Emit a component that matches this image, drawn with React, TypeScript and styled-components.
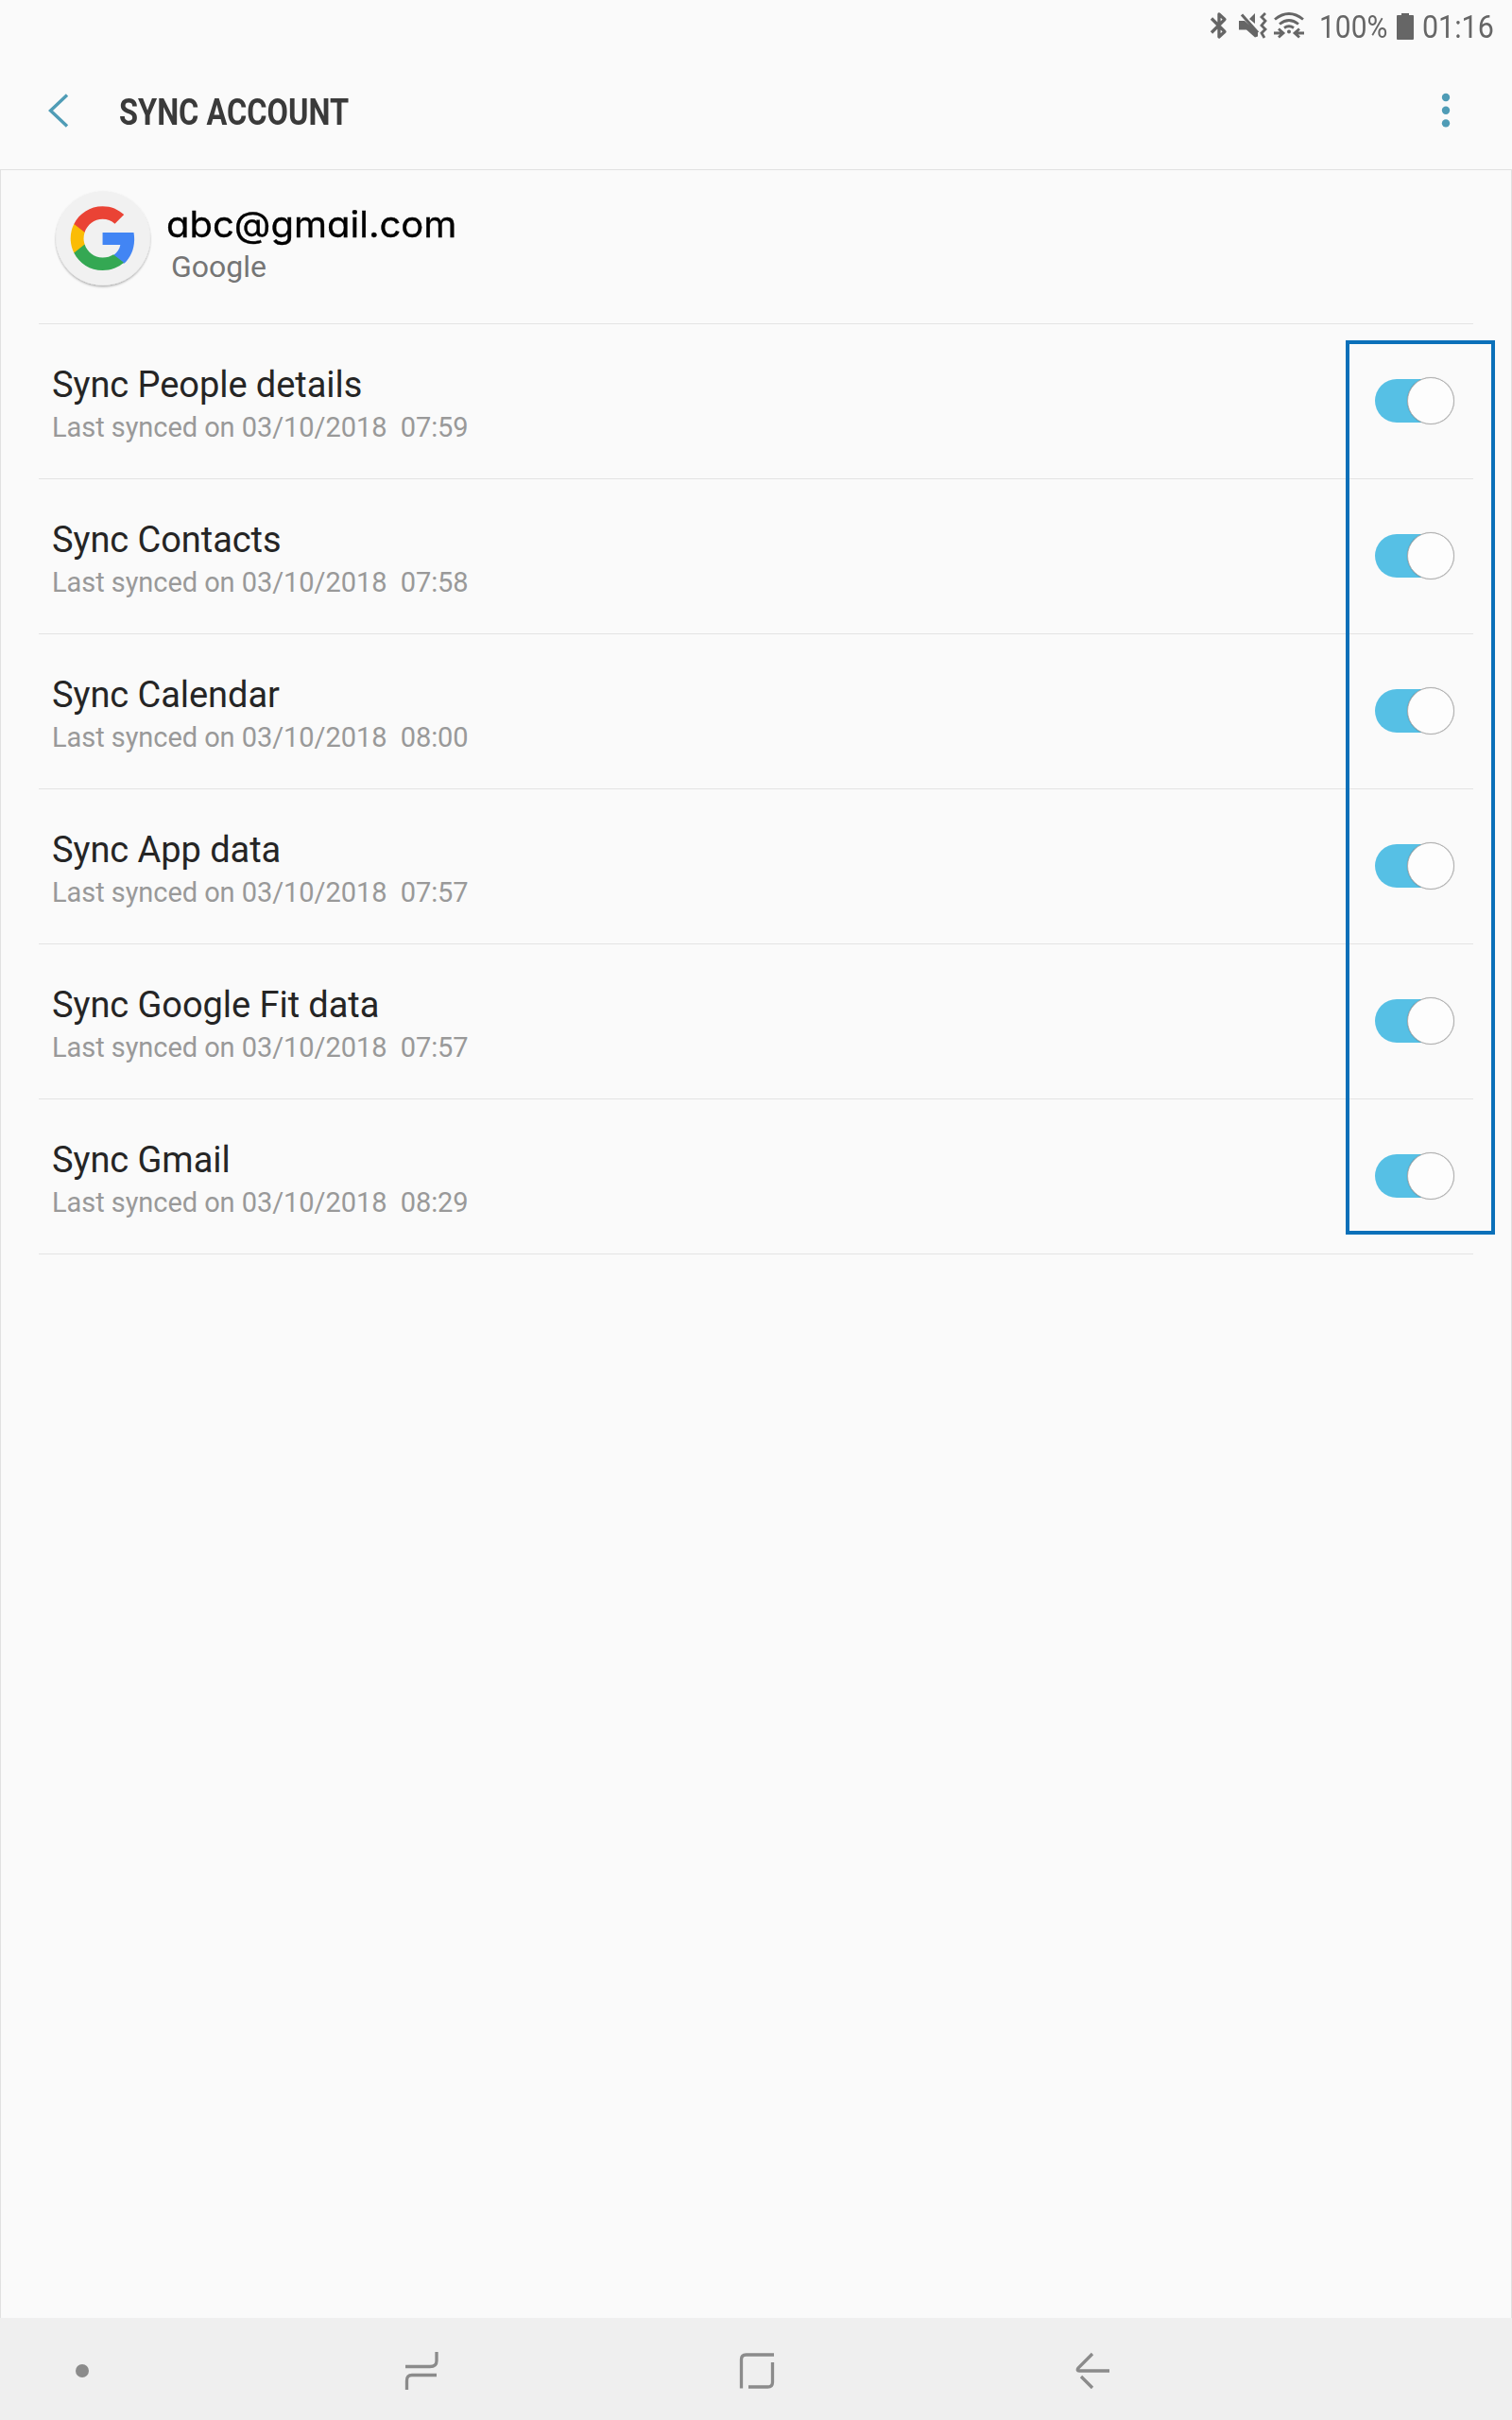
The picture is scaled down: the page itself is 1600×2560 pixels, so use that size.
import React from "react";
import styled, { createGlobalStyle } from "styled-components";

const GlobalStyle = createGlobalStyle`
  * { box-sizing: border-box; }
  html, body { margin: 0; padding: 0; background: #fafafa; }
  body { font-family: Roboto, "Noto Sans", sans-serif; }
`;

const Screen = styled.div`
  width: 1600px;
  height: 2560px;
  display: flex;
  flex-direction: column;
  background: #fafafa;
  overflow: hidden;
`;

const StatusBar = styled.header`
  height: 56px;
  padding-left: 1280px;
  display: flex;
  align-items: center;
  flex: none;
  color: #666;
`;

const StatusIcons = styled.svg`
  width: 102px;
  height: 56px;
  flex: none;
`;

const StatusText = styled.span<{ $width: number; $left: number; $scale: number }>`
  width: ${(p) => p.$width}px;
  margin-left: ${(p) => p.$left}px;
  flex: none;
  font-size: 34px;
  line-height: 56px;
  white-space: nowrap;
  transform: scaleX(${(p) => p.$scale});
  transform-origin: left center;
`;

const Battery = styled.svg`
  width: 18px;
  height: 28px;
  flex: none;
  margin: 0 0 1px 11px;
`;

const TitleBar = styled.div`
  height: 123px;
  padding: 0 64px 0 51px;
  display: flex;
  align-items: center;
  flex: none;
`;

const BackIcon = styled.svg`
  width: 22px;
  height: 36px;
  margin-bottom: 1px;
`;

const Title = styled.h1`
  flex: 1;
  margin: 3px 0 0 53px;
  font-size: 38px;
  font-weight: 700;
  line-height: 44px;
  color: #3a3a3a;
  transform: scaleX(0.856);
  transform-origin: left center;
  white-space: nowrap;
`;

const MenuIcon = styled.svg`
  width: 12px;
  height: 40px;
  margin-bottom: 1px;
`;

const Panel = styled.main`
  flex: 1;
  border: 1px solid #e1e1e1;
  border-bottom: 0;
  padding: 0 40px;
`;

const Account = styled.section`
  height: 163px;
  display: flex;
  border-bottom: 1px solid #e3e3e3;
  padding: 16px 0 0 12px;
`;

const Avatar = styled.svg`
  width: 112px;
  height: 112px;
  flex: none;
`;

const AccountText = styled.div`
  padding: 17px 0 0 11px;
`;

const Email = styled.div`
  font-family: Inter, sans-serif;
  font-feature-settings: "cv11", "ss03";
  font-size: 38px;
  line-height: 48px;
  color: #000;
  white-space: nowrap;
  -webkit-text-stroke: 0.35px #000;
  transform: scaleX(1.053);
  transform-origin: left center;
`;

const Provider = styled.div`
  padding: 1px 0 0 5px;
  font-size: 32px;
  line-height: 40px;
  color: #757575;
`;

const List = styled.div`
  position: relative;
`;

const Row = styled.div`
  height: 164px;
  padding: 0 19px 0 14px;
  border-bottom: 1px solid #e3e3e3;
  display: flex;
  align-items: center;
  justify-content: space-between;
`;

const RowText = styled.div`
  padding-top: 9px;
`;

const Name = styled.div`
  font-size: 38px;
  letter-spacing: -0.06px;
  line-height: 45px;
  color: #252525;
  white-space: nowrap;
`;

const Detail = styled.div`
  font-size: 29px;
  letter-spacing: -0.06px;
  line-height: 44px;
  color: #999;
  white-space: pre;
`;

const Track = styled.div`
  width: 76px;
  height: 46px;
  display: flex;
  align-items: center;
  justify-content: flex-end;
  border-radius: 23px;
  margin: 0 9px 1px 0;
  background: #56c0e5;
`;

const Knob = styled.div`
  width: 50px;
  height: 50px;
  flex: none;
  margin-right: -8px;
  border: 1px solid #b0b0b0;
  border-radius: 50%;
  background: #fdfdfd;
  box-shadow: 0 0 1px rgba(0, 0, 0, 0.3);
`;

const Highlight = styled.div`
  position: absolute;
  left: 1383px;
  top: 17px;
  width: 158px;
  height: 946px;
  border: 4px solid #0b70b9;
`;

const NavBar = styled.nav`
  height: 108px;
  flex: none;
  display: flex;
  align-items: center;
  background: #efefef;
`;

const NavIcon = styled.svg<{ $left: number }>`
  width: 44px;
  height: 44px;
  flex: none;
  margin: 8px 0 0 ${(p) => p.$left}px;
  fill: none;
  stroke: #8b8b8b;
  stroke-width: 3.3;
`;

const items = [
  { name: "Sync People details", time: "07:59" },
  { name: "Sync Contacts", time: "07:58" },
  { name: "Sync Calendar", time: "08:00" },
  { name: "Sync App data", time: "07:57" },
  { name: "Sync Google Fit data", time: "07:57" },
  { name: "Sync Gmail", time: "08:29" },
];

export default function App() {
  return (
    <>
      <GlobalStyle />
      <Screen>
        <StatusBar>
          <StatusIcons viewBox="1280 0 102 56" fill="none" stroke="#666" strokeWidth="2.8">
            <path d="M1282 19.500 1296 33.500 1290 39V15L1296 20.500 1282 34.500" strokeWidth="3.3" strokeLinejoin="round" />
            <path d="M1311 22h6l14 12v4.500l-3 1-9-8h-8zM1322 20l6-6v11z" fill="#666" stroke="none" />
            <path d="M1314 15.500 1331 34.500" strokeWidth="3" />
            <path d="M1339 14l-4 4 4 4-4 5 4 4-4 4 3 5" strokeWidth="2.8" />
            <path d="M1349 20.500q15-12 30 0M1354 25.500q10-8 20 0M1359 29.500q5-3.500 10 0" />
            <circle cx="1364" cy="33.500" r="2" fill="#666" stroke="none" />
            <path d="M1348 35h9M1380 35h-9M1353 30.500l5 4.500-5 4.500M1375 30.500l-5 4.500 5 4.500" />
          </StatusIcons>
          <StatusText $width={71} $left={14} $scale={0.88}>100%</StatusText>
          <Battery viewBox="0 0 18 28">
            <path d="M5 0h8v2h4q1 0 1 1v24q0 1-1 1H1q-1 0-1-1V3q0-1 1-1h4z" fill="#666" />
          </Battery>
          <StatusText $width={76} $left={9} $scale={0.895}>01:16</StatusText>
        </StatusBar>
        <TitleBar>
          <BackIcon viewBox="0 0 22 36" fill="none" stroke="#4f9cb6" strokeWidth="3.4">
            <path d="M20 1.500 2.500 18 20 34.500" />
          </BackIcon>
          <Title>SYNC ACCOUNT</Title>
          <MenuIcon viewBox="0 0 12 40" fill="#4f9cb6">
            <circle cx="6" cy="6" r="4.200" />
            <circle cx="6" cy="19.700" r="4.200" />
            <circle cx="6" cy="33.400" r="4.200" />
          </MenuIcon>
        </TitleBar>
        <Panel>
          <Account>
            <Avatar viewBox="53 196 112 112">
              <defs>
                <filter id="shade" x="-10%" y="-10%" width="120%" height="120%">
                  <feDropShadow dx="0" dy="1.500" stdDeviation="1.200" floodColor="#000" floodOpacity=".32" />
                </filter>
              </defs>
              <circle cx="109" cy="252" r="49.800" fill="#f1f1f1" filter="url(#shade)" />
              <g transform="translate(71.600 215.200) scale(1.54)">
                <path fill="#4285f4" d="M45.800 24.500c0-1.560-.14-3.060-.4-4.500H24v8.510h12.200c-.55 2.850-2.150 5.240-4.500 6.870v5.700h7.300c4.300-3.930 6.800-9.700 6.800-16.580z" />
                <path fill="#34a853" d="M24 46c5.940 0 10.920-1.970 14.560-5.330l-7.110-5.520c-1.970 1.320-4.490 2.100-7.450 2.100-5.730 0-10.580-3.870-12.310-9.070H4.340v5.700C7.960 41.070 15.400 46 24 46z" />
                <path fill="#fbbc05" d="M11.700 28.180c-.45-1.320-.7-2.730-.7-4.180s.25-2.860.7-4.180v-5.700H4.340A21.990 21.990 0 0 0 2 24c0 3.550.85 6.910 2.340 9.880z" />
                <path fill="#ea4335" d="M24 10.750c3.230 0 6.130 1.110 8.410 3.290l6.310-6.310C34.910 4.180 29.930 2 24 2 15.400 2 7.960 6.930 4.340 14.120l7.350 5.700c1.730-5.200 6.580-9.070 12.310-9.070z" />
              </g>
            </Avatar>
            <AccountText>
              <Email>abc@gmail.com</Email>
              <Provider>Google</Provider>
            </AccountText>
          </Account>
          <List>
            {items.map((item) => (
              <Row key={item.name}>
                <RowText>
                  <Name>{item.name}</Name>
                  <Detail>{`Last synced on 03/10/2018  ${item.time}`}</Detail>
                </RowText>
                <Track>
                  <Knob />
                </Track>
              </Row>
            ))}
            <Highlight />
          </List>
        </Panel>
        <NavBar>
          <NavIcon viewBox="0 0 44 44" $left={65}>
            <circle cx="22" cy="20" r="7" fill="#8b8b8b" stroke="none" />
          </NavIcon>
          <NavIcon viewBox="0 0 44 44" $left={316}>
            <path d="M4 15.500h26q7 0 7-6V0M37 24.500H11q-5.500 0-5.500 6V40" />
          </NavIcon>
          <NavIcon viewBox="0 0 44 44" $left={310}>
            <path d="M5.500 38.500V8q0-5 5-5H40M38.500 11v21q0 5-5 5H13" />
          </NavIcon>
          <NavIcon viewBox="0 0 44 44" $left={311}>
            <path d="M22 2 7 17q-2 3 1 3H40M10 26 22 38" />
          </NavIcon>
        </NavBar>
      </Screen>
    </>
  );
}
